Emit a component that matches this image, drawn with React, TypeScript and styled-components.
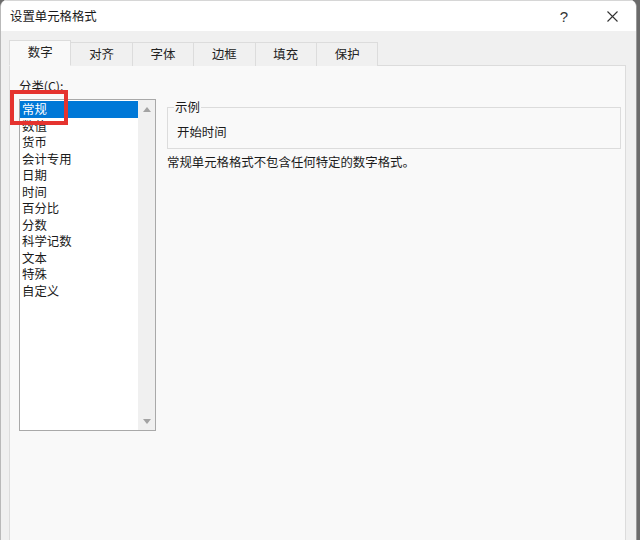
import React from "react";
import styled, { createGlobalStyle } from "styled-components";

const GlobalStyle = createGlobalStyle`
    html, body {
        margin: 0;
        padding: 0;
        background: #6b6b6b;
    }
    body {
        font-family: "Noto Sans CJK SC", "Noto Sans", sans-serif;
        color: #1b1b1b;
    }
`;

const categories = [
    "常规",
    "数值",
    "货币",
    "会计专用",
    "日期",
    "时间",
    "百分比",
    "分数",
    "科学记数",
    "文本",
    "特殊",
    "自定义",
];

const tabs = ["数字", "对齐", "字体", "边框", "填充", "保护"];

const Window = styled.div`
    position: relative;
    width: 637px;
    height: 540px;
    background: #f0f0f0;
    border-left: 1px solid #b9b9b9;
    border-right: 1px solid #9a9a9a;
    border-top-left-radius: 7px;
    border-top-right-radius: 7px;
    overflow: hidden;
    box-sizing: border-box;
`;

const TitleBar = styled.div`
    height: 31px;
    background: #ffffff;
    display: flex;
    align-items: center;
    padding-left: 9px;
    border-top: 1px solid #d6d6d6;
    box-sizing: border-box;
`;

const Title = styled.div`
    flex: 1;
    font-size: 12.4px;
    line-height: 16px;
    color: #1a1a1a;
`;

const TitleButton = styled.div`
    width: 48px;
    height: 30px;
    display: flex;
    align-items: center;
    justify-content: center;
    font-family: "Liberation Sans", sans-serif;
    font-size: 15px;
    color: #333;
`;

const Body = styled.div`
    padding: 9px 10px 0 8px;
`;

const TabRow = styled.div`
    display: flex;
    align-items: flex-end;
    height: 26px;
`;

const Tab = styled.div<{ $active?: boolean }>`
    width: 62.4px;
    height: ${(p) => (p.$active ? "26px" : "24px")};
    box-sizing: border-box;
    display: flex;
    align-items: center;
    justify-content: center;
    padding-bottom: ${(p) => (p.$active ? "2px" : "1px")};
    font-size: 12.4px;
    line-height: 16px;
    color: #222;
    background: ${(p) => (p.$active ? "#f9f9f9" : "#f0f0f0")};
    border: 1px solid #dcdcdc;
    border-bottom: ${(p) => (p.$active ? "1px solid #f9f9f9" : "none")};
    margin-left: -1px;
    position: relative;
    z-index: ${(p) => (p.$active ? 2 : 1)};
    &:first-child {
        margin-left: 0;
    }
`;

const Panel = styled.div`
    margin-top: -1px;
    height: 520px;
    background: #f9f9f9;
    border: 1px solid #dcdcdc;
    box-sizing: border-box;
    display: grid;
    grid-template-columns: 137px 1fr;
    grid-template-rows: 21px auto;
    align-content: start;
    column-gap: 11px;
    padding: 12px 7px 0 9px;
`;

const Label = styled.div`
    grid-column: 1 / 3;
    font-size: 12.4px;
    line-height: 16px;
    color: #1b1b1b;
`;

const ListBox = styled.div`
    height: 332px;
    border: 1px solid #a9a9a9;
    background: #ffffff;
    display: flex;
    box-sizing: border-box;
`;

const Items = styled.div`
    flex: 1;
    padding-top: 1px;
`;

const Item = styled.div<{ $selected?: boolean }>`
    height: 16.5px;
    line-height: 16.5px;
    font-size: 12.4px;
    padding-left: 2px;
    color: ${(p) => (p.$selected ? "#ffffff" : "#1b1b1b")};
    background: ${(p) => (p.$selected ? "#0078d7" : "transparent")};
`;

const ScrollBar = styled.div`
    width: 17px;
    background: #f0f0f0;
    display: flex;
    flex-direction: column;
    justify-content: space-between;
    align-items: center;
    padding: 7px 0 6px;
    box-sizing: border-box;
`;

const Arrow = styled.div<{ $down?: boolean }>`
    width: 0;
    height: 0;
    border-left: 4px solid transparent;
    border-right: 4px solid transparent;
    ${(p) =>
        p.$down
            ? "border-top: 5px solid #a3a3a3;"
            : "border-bottom: 5px solid #a3a3a3;"}
`;

const RightColumn = styled.div`
    display: flex;
    flex-direction: column;
`;

const SampleBox = styled.fieldset`
    margin: 0;
    padding: 9px 9px 8px;
    border: 1px solid #dcdcdc;
    width: 454px;
    box-sizing: border-box;
`;

const Legend = styled.legend`
    padding: 0 1px;
    margin-left: -3px;
    font-size: 12.4px;
    line-height: 16px;
    color: #1b1b1b;
`;

const SampleText = styled.div`
    font-size: 12.4px;
    line-height: 16px;
`;

const Description = styled.div`
    margin-top: 5px;
    font-size: 12.4px;
    line-height: 16px;
`;

const Highlight = styled.div`
    position: absolute;
    left: 9px;
    top: 90px;
    width: 58px;
    height: 35px;
    border: 4px solid #e5332f;
    box-sizing: border-box;
    pointer-events: none;
`;

export default function App() {
    return (
        <>
            <GlobalStyle />
            <Window>
                <TitleBar>
                    <Title>设置单元格格式</Title>
                    <TitleButton>?</TitleButton>
                    <TitleButton>
                        <svg width="11" height="11" viewBox="0 0 11 11">
                            <path
                                d="M0.5 0.5 L10.5 10.5 M10.5 0.5 L0.5 10.5"
                                stroke="#333"
                                strokeWidth="1.1"
                                fill="none"
                            />
                        </svg>
                    </TitleButton>
                </TitleBar>
                <Body>
                    <TabRow>
                        {tabs.map((t, i) => (
                            <Tab key={t} $active={i === 0}>
                                {t}
                            </Tab>
                        ))}
                    </TabRow>
                    <Panel>
                        <Label>分类(C):</Label>
                        <ListBox>
                            <Items>
                                {categories.map((c, i) => (
                                    <Item key={c} $selected={i === 0}>
                                        {c}
                                    </Item>
                                ))}
                            </Items>
                            <ScrollBar>
                                <Arrow />
                                <Arrow $down />
                            </ScrollBar>
                        </ListBox>
                        <RightColumn>
                            <SampleBox>
                                <Legend>示例</Legend>
                                <SampleText>开始时间</SampleText>
                            </SampleBox>
                            <Description>
                                常规单元格格式不包含任何特定的数字格式。
                            </Description>
                        </RightColumn>
                    </Panel>
                </Body>
                <Highlight />
            </Window>
        </>
    );
}
